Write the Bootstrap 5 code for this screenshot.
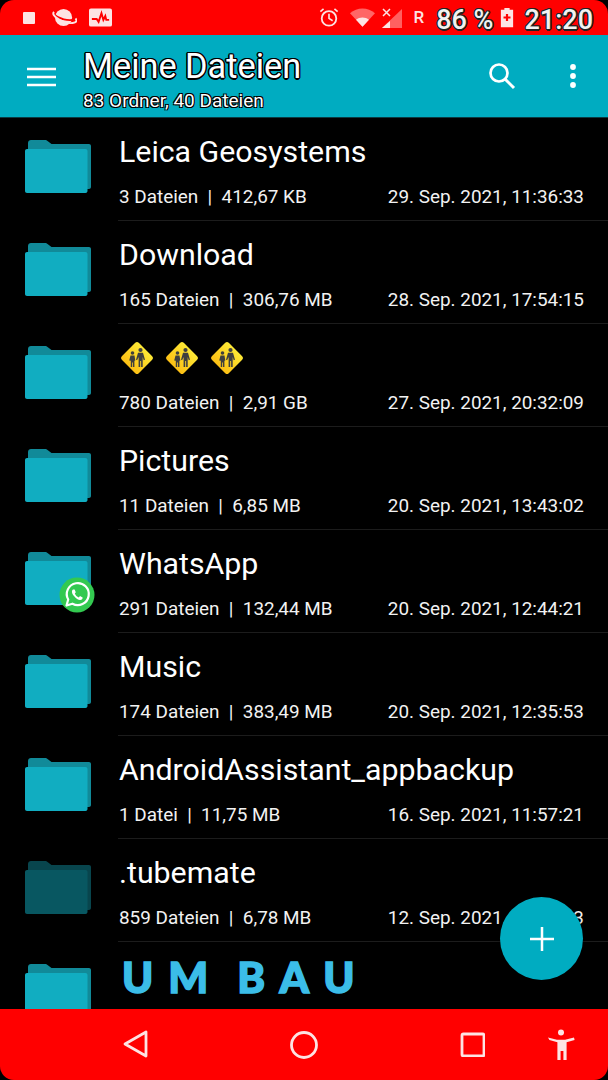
<!DOCTYPE html>
<html lang="de">
<head>
  <meta charset="UTF-8">
  <meta name="viewport" content="width=device-width, initial-scale=1.0">
  <title>Meine Dateien</title>
  <link href="https://cdn.jsdelivr.net/npm/bootstrap@5.3.2/dist/css/bootstrap.min.css" rel="stylesheet">
  <style>
    html, body { background: #000; margin: 0; }
    body { font-family: Roboto, "Liberation Sans", sans-serif; color: #fff; }
    .phone {
      width: 608px; height: 1080px; position: relative; overflow: hidden;
      border-radius: 14px; background: #000;
    }
    .svg-defs { position: absolute; }
    .status-bar { height: 35px; background: #f00; padding: 0 15px 0 23px; }
    .status-num {
      font-size: 27px; font-weight: 500; color: #f2f2f2; line-height: 35px; white-space: nowrap; margin-top: 6px;
      text-shadow: -1px -1px 0 #222, 1px -1px 0 #222, -1px 1px 0 #222, 1px 1px 0 #222, 0 1.5px 0 #222, 0 -1.5px 0 #222, 1.5px 0 0 #222, -1.5px 0 0 #222;
    }
    .st-square { margin-right: 17px; }
    .st-planet { margin-right: 12px; }
    .st-alarm { margin-right: 11px; }
    .st-wifi { margin-right: 7px; }
    .st-signal { margin-right: 11px; }
    .st-roam { font-size: 17px; font-weight: 500; color: #fde3e3; margin-right: 12px; }
    .st-percent { margin-right: 7px; }
    .st-batt { margin-right: 10px; }
    .app-bar { height: 83px; background: #00acc1; padding-left: 27px; border-bottom: 1px solid #0a3a42; }
    .menu-icon { margin-top: 2px; flex: none; }
    .app-heading { margin-left: 27px; margin-top: 7px; }
    .app-title {
      font-size: 34.3px; line-height: 38px; margin: 0; font-weight: 400;
      text-shadow: -1px -1px 0 #000, 1px -1px 0 #000, -1px 1px 0 #000, 1px 1px 0 #000, 0 1.5px 0 #000, 0 -1.5px 0 #000, 1.5px 0 0 #000, -1.5px 0 0 #000;
    }
    .app-sub {
      font-size: 19px; line-height: 22px; margin-top: 5px;
      text-shadow: -1px -1px 0 #000, 1px -1px 0 #000, -1px 1px 0 #000, 1px 1px 0 #000;
    }
    .search-icon { margin-right: 54px; margin-left: auto; }
    .more-icon { margin-right: 32px; }
    .file-list { height: 891px; overflow: hidden; }
    .file-row { height: 103px; padding-left: 25px; }
    .folder-box { width: 66px; height: 53px; margin-top: 22px; position: relative; flex: none; }
    .folder-box.dim { opacity: .5; }
    .row-body { margin-left: 27px; flex: 1; height: 103px; padding-right: 24px; border-bottom: 1px solid #1c1c1c; min-width: 0; }
    .file-name { font-size: 30.3px; line-height: 36px; padding-top: 16px; padding-left: 1px; height: 60px; }
    .file-meta { font-size: 18.9px; line-height: 22px; margin-top: 8px; padding-left: 1px; color: #f2f2f2; }
    .wa-badge { position: absolute; left: 34px; top: 25px; }
    .emoji-row { gap: 11px; padding-top: 1px; margin-left: 1px; }
    .um-bau {
      font-family: Lato, Roboto, sans-serif; font-weight: 900; font-size: 42px; line-height: 50px;
      color: #3bbde8; letter-spacing: 15px; word-spacing: -11px; margin-left: 3px; margin-top: -6px; white-space: nowrap;
      -webkit-text-stroke: 1.5px #3bbde8;
    }
    .fab {
      position: absolute; left: 500px; top: 897px; width: 83px; height: 83px; border-radius: 50%;
      background: #00acc1; box-shadow: 0 2px 5px rgba(0,0,0,.4);
    }
    .nav-strip { position: absolute; left: 0; right: 0; bottom: 0; height: 71px; background: #f00; }
    .nav-strip svg { position: absolute; }
    .nv-back { left: 123px; top: 20px; }
    .nv-home { left: 289px; top: 21px; }
    .nv-recent { left: 459px; top: 22px; }
    .nv-access { left: 547px; top: 20px; }
  </style>
</head>
<body>
<svg width="0" height="0" class="svg-defs">
  <defs>
    <linearGradient id="signy" x1="0" y1="0" x2="0" y2="1">
      <stop offset="0" stop-color="#fde835"/><stop offset="1" stop-color="#fcbf14"/>
    </linearGradient>
  </defs>
  <symbol id="folder" viewBox="0 0 66 53">
    <path d="M6 0h14c1.500 0 2.300.6 3.200 1.500L26.500 4H64c1.100 0 2 .9 2 2v41c0 1.100-.9 2-2 2H6c-1.700 0-3-1.300-3-3V3c0-1.700 1.300-3 3-3z" fill="#118a99"/>
    <path d="M2 9h58.500c1.100 0 2 .9 2 2v40c0 1.100-.9 2-2 2H2c-1.100 0-2-.9-2-2V11c0-1.100.9-2 2-2z" fill="#11adc1"/>
  </symbol>
  <symbol id="school" viewBox="0 0 34 34">
    <rect x="5" y="5" width="24" height="24" rx="2.500" transform="rotate(45 17 17)" fill="url(#signy)"/>
    <g fill="#3f3f3f">
      <circle cx="12.500" cy="12" r="1.800"/>
      <circle cx="20.500" cy="9" r="2.100"/>
      <path d="M10.500 14.500h4l.8 5-.9.300V26H13v-4.500h-.8V26h-1.400v-6.200l-1.600-.3z"/>
      <path d="M18 11.800h5l2 7-1.300.4-1-3.200v10h-1.600v-6h-.9v6h-1.600v-10l-1.500 3.200-1.100-.4z"/>
    </g>
  </symbol>
</svg>

<div class="phone">
  <div class="status-bar d-flex align-items-center">
    <svg width="12" height="12" viewBox="0 0 12 12" class="st-square"><rect width="12" height="12" rx="1" fill="#fde3e3"/></svg>
    <svg width="25" height="20" viewBox="0 0 26 21" class="st-planet">
      <circle cx="12" cy="10" r="9" fill="#fde3e3"/>
      <path d="M1 6c6 6 16 8 24 6" stroke="#f00" stroke-width="2" fill="none"/>
      <path d="M2 4C0 6 2 9 7 12c6 3.500 13 4.500 17 3 2-.8 2-2.600.5-4" stroke="#fde3e3" stroke-width="2" fill="none"/>
    </svg>
    <svg width="23" height="19" viewBox="0 0 24 19">
      <rect width="24" height="19" rx="2" fill="#fde3e3"/>
      <path d="M3 11h5l2 3 3-9 2 7 2-4 1 4h3" stroke="#f00" stroke-width="2" fill="none"/>
    </svg>
    <div class="ms-auto d-flex align-items-center">
      <svg width="20" height="21" viewBox="0 0 22 22" class="st-alarm">
        <circle cx="11" cy="12" r="8" stroke="#fde3e3" stroke-width="2" fill="none"/>
        <path d="M11 7v5l4 2.500M1.500 4.500 5 1.500M20.500 4.500 17 1.500" stroke="#fde3e3" stroke-width="1.800" fill="none"/>
      </svg>
      <svg width="25" height="19" viewBox="0 0 27 20" class="st-wifi"><path d="M0 5.500C7.500-1.500 19.500-1.500 27 5.500L13.500 20z" fill="#ff6666"/><path d="M6.500 12.500c4-3.500 10-3.500 14 0l-7 7.500z" fill="#fde3e3"/></svg>
      <svg width="20" height="20" viewBox="0 0 20 20" class="st-signal">
        <path d="M20 1v19H0z" fill="#ff6060"/><path d="M8 20v-7l-8 7z" fill="#fde3e3"/>
        <path d="M1 1l7 7M8 1 1 8" stroke="#fde3e3" stroke-width="1.500"/>
      </svg>
      <span class="st-roam">R</span>
      <span class="status-num st-percent">86 %</span>
      <svg width="14" height="21" viewBox="0 0 16 22" class="st-batt"><path d="M5 0h6v2h4v20H1V2h4z" fill="#fde3e3"/><path d="M8 7v8M4 11h8" stroke="#f00" stroke-width="2.500"/></svg>
      <span class="status-num">21:20</span>
    </div>
  </div>

  <div class="app-bar d-flex align-items-center">
    <svg width="29" height="20" viewBox="0 0 29 20" class="menu-icon"><path d="M0 2h29M0 10h29M0 18h29" stroke="#fff" stroke-width="2.500"/></svg>
    <div class="app-heading">
      <h1 class="app-title">Meine Dateien</h1>
      <div class="app-sub">83 Ordner, 40 Dateien</div>
    </div>
    <svg width="28" height="28" viewBox="0 0 28 28" class="search-icon"><circle cx="11" cy="11" r="8.500" stroke="#fff" stroke-width="2.700" fill="none"/><path d="M17 17l9 9" stroke="#fff" stroke-width="3"/></svg>
    <svg width="6" height="24" viewBox="0 0 6 24" class="more-icon"><circle cx="3" cy="3" r="2.900" fill="#fff"/><circle cx="3" cy="12" r="2.900" fill="#fff"/><circle cx="3" cy="21" r="2.900" fill="#fff"/></svg>
  </div>

  <div class="file-list" id="list"></div>

  <div class="fab d-flex align-items-center justify-content-center">
    <svg width="26" height="26" viewBox="0 0 26 26"><path d="M13 1v24M1 13h24" stroke="#fff" stroke-width="2.500"/></svg>
  </div>

  <div class="nav-strip">
    <svg class="nv-back" width="26" height="30" viewBox="0 0 26 30"><path d="M23 3v24L2 15z" stroke="#fde3e3" stroke-width="2.800" stroke-linejoin="round" fill="none"/></svg>
    <svg class="nv-home" width="30" height="30" viewBox="0 0 30 30"><circle cx="15" cy="15" r="12.500" stroke="#fde3e3" stroke-width="2.800" fill="none"/></svg>
    <svg class="nv-recent" width="26" height="26" viewBox="0 0 26 26"><rect x="3" y="3" width="22" height="22" rx="1.500" stroke="#fde3e3" stroke-width="2.800" fill="none"/></svg>
    <svg class="nv-access" width="28" height="31" viewBox="0 0 28 31"><circle cx="14" cy="3.500" r="3" fill="#fde3e3"/><path d="M1 8.500l9 2.300h8l9-2.300.6 2.400-8 2.300V31h-3.200v-9h-2.800v9H10.400V13.200l-8-2.300z" fill="#fde3e3"/></svg>
  </div>
</div>

<script>
  const school = '<svg width="34" height="34"><use href="#school"/></svg>';
  const whatsapp = `<svg class="wa-badge" width="36" height="36" viewBox="0 0 36 36">
    <circle cx="18" cy="18" r="17.500" fill="#33c950"/>
    <path d="M7.500 28.500l1.700-6a11 11 0 1 1 4.200 4.200z" fill="none" stroke="#fff" stroke-width="2.200" stroke-linejoin="round"/>
    <path d="M14 12.500c-1.500 1.200-1.500 3.500 1 6.500s5 4.500 7 3.800c1.400-.5 1.800-1.700 1.600-2.400l-2.600-1.300-1.200 1.300c-1.800-.8-3.200-2.200-4-4l1-1.200-1.200-2.800z" fill="#fff"/>
  </svg>`;
  const rows = [
    { name: 'Leica Geosystems', info: '3 Dateien&nbsp; | &nbsp;412,67 KB', date: '29. Sep. 2021, 11:36:33' },
    { name: 'Download', info: '165 Dateien&nbsp; | &nbsp;306,76 MB', date: '28. Sep. 2021, 17:54:15' },
    { name: `<div class="d-flex emoji-row">${school}${school}${school}</div>`, info: '780 Dateien&nbsp; | &nbsp;2,91 GB', date: '27. Sep. 2021, 20:32:09' },
    { name: 'Pictures', info: '11 Dateien&nbsp; | &nbsp;6,85 MB', date: '20. Sep. 2021, 13:43:02' },
    { name: 'WhatsApp', info: '291 Dateien&nbsp; | &nbsp;132,44 MB', date: '20. Sep. 2021, 12:44:21', badge: whatsapp },
    { name: 'Music', info: '174 Dateien&nbsp; | &nbsp;383,49 MB', date: '20. Sep. 2021, 12:35:53' },
    { name: 'AndroidAssistant_appbackup', info: '1 Datei&nbsp; | &nbsp;11,75 MB', date: '16. Sep. 2021, 11:57:21' },
    { name: '.tubemate', info: '859 Dateien&nbsp; | &nbsp;6,78 MB', date: '12. Sep. 2021, 11:20:43', dim: true },
    { name: '<div class="um-bau">UM BAU</div>', info: '', date: '' }
  ];
  document.getElementById('list').innerHTML = rows.map(r => `
    <div class="file-row d-flex">
      <div class="folder-box${r.dim ? ' dim' : ''}"><svg width="66" height="53" class="d-block"><use href="#folder"/></svg>${r.badge || ''}</div>
      <div class="row-body">
        <div class="file-name">${r.name}</div>
        <div class="file-meta d-flex justify-content-between"><span>${r.info}</span><span>${r.date}</span></div>
      </div>
    </div>`).join('');
</script>
<script src="https://cdn.jsdelivr.net/npm/bootstrap@5.3.2/dist/js/bootstrap.bundle.min.js"></script>
</body>
</html>
